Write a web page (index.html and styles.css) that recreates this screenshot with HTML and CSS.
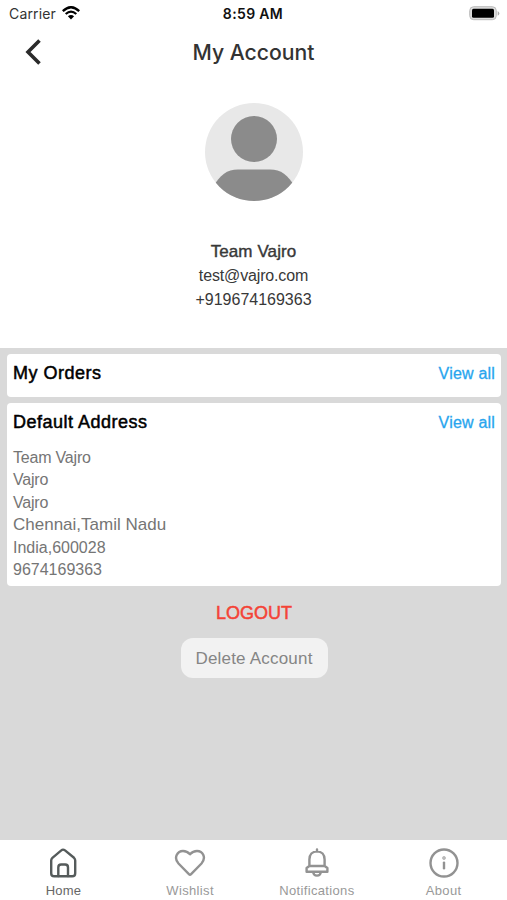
FILE: index.html
```html
<!DOCTYPE html>
<html lang="en">
<head>
	<meta charset="utf-8">
	<title>My Account</title>
	<link rel="stylesheet" href="styles.css">
</head>
<body>
	<div class="status">
		<div class="carrier">
			<span>Carrier</span>
			<svg width="18" height="14" viewBox="0 0 18 14">
				<path d="M0.8 5.1 Q9 -2.7 17.2 5.1" fill="none" stroke="#000" stroke-width="2.3"/>
				<path d="M3.7 8 Q9 3.1 14.3 8" fill="none" stroke="#000" stroke-width="2.2"/>
				<path d="M5.9 10.3 Q9 7.6 12.1 10.3 L9 13.5 Z"/>
			</svg>
		</div>
		<span class="time">8:59 AM</span>
		<svg class="battery" width="31" height="15" viewBox="0 0 31 15">
			<rect x="0.7" y="0.7" width="26.6" height="13" rx="4" fill="#ddd" stroke="#bbb"/>
			<rect x="3" y="2.7" width="22" height="9" rx="1.5"/>
			<path d="M28.7 5 Q32 7.4 28.7 9.8 Z" fill="#aaa"/>
		</svg>
	</div>
	<header class="header">
		<svg class="back" width="16" height="26" viewBox="0 0 16 26">
			<path d="M14.5 1.5 L3 13 L14.5 24.5" fill="none" stroke="#2b2b2b" stroke-width="3.6"/>
		</svg>
		<h1>My Account</h1>
	</header>
	<section class="profile">
		<svg width="98" height="98" viewBox="0 0 98 98">
			<clipPath id="round"><circle cx="49" cy="49" r="49"/></clipPath>
			<g clip-path="url(#round)">
				<rect width="98" height="98" fill="#e8e8e8"/>
				<circle cx="49" cy="36" r="23" fill="#8b8b8b"/>
				<path d="M8 84 C15 72 22 66.5 33 66.5 H65 C76 66.5 83 72 90 84 V98 H8 Z" fill="#8b8b8b"/>
			</g>
		</svg>
		<div class="name">Team Vajro</div>
		<div class="contact mail">test@vajro.com</div>
		<div class="contact">+919674169363</div>
	</section>
	<main>
		<div class="card">
			<div class="card-head">
				<h2>My Orders</h2>
				<a>View all</a>
			</div>
		</div>
		<div class="card">
			<div class="card-head">
				<h2>Default Address</h2>
				<a>View all</a>
			</div>
			<div class="address">
				<div class="person">Team Vajro</div>
				<div class="person">Vajro</div>
				<div class="person">Vajro</div>
				<div class="city">Chennai,Tamil Nadu</div>
				<div>India,600028</div>
				<div>9674169363</div>
			</div>
		</div>
		<a class="logout">LOGOUT</a>
		<button type="button" class="delete">Delete Account</button>
	</main>
	<nav class="tabs">
		<div class="tab active">
			<svg width="32" height="32" viewBox="0 0 32 32">
				<path d="M16 2.6 Q15.2 2.6 14.3 3.4 L5.4 10.8 Q4.2 11.9 4.2 13.6 V26.2 Q4.2 29.3 7.2 29.3 H25.2 Q28.2 29.3 28.2 26.2 V13.6 Q28.2 11.9 27 10.8 L18 3.4 Q17 2.6 16 2.6 Z"/>
				<path d="M11.3 29 V20.5 Q11.3 17.5 14.1 17.5 H18.2 Q21 17.5 21 20.5 V29"/>
			</svg>
			<span>Home</span>
		</div>
		<div class="tab">
			<svg width="32" height="32" viewBox="0 0 32 32">
				<path d="M14.9 27.1 L4.5 16.5 C-0.8 10.6 3.5 4 9 4 Q13 4 16 7.3 Q19 4 23 4 C28.8 4 32.6 10.6 27.5 16.5 L17.1 27.1 Q16 28.2 14.9 27.1 Z"/>
			</svg>
			<span>Wishlist</span>
		</div>
		<div class="tab">
			<svg width="32" height="32" viewBox="0 0 32 32">
				<path d="M16 2.4 V4.5 M8.4 19 V12.5 C8.4 7.5 11.4 4.4 16 4.4 C20.6 4.4 23.6 7.5 23.6 12.5 V19 L26.4 21 V24.8 H5.6 V21 L8.4 19 H23.6 M12.2 25 Q12.5 28.6 16 28.6 Q19.5 28.6 19.8 25"/>
			</svg>
			<span>Notifications</span>
		</div>
		<div class="tab">
			<svg width="32" height="32" viewBox="0 0 32 32">
				<circle cx="16" cy="16" r="13.5"/>
				<path d="M16 15.6 V21.3"/>
				<circle cx="16" cy="11" r="0.5"/>
			</svg>
			<span>About</span>
		</div>
	</nav>
</body>
</html>
```

FILE: styles.css
```css
* {
	box-sizing: border-box;
}

body {
	margin: 0;
	height: 900px;
	display: flex;
	flex-direction: column;
	font-family: "Liberation Sans", Arial, sans-serif;
	background-color: #fff;
}

svg {
	display: block;
}

.status {
	height: 27px;
	padding: 0 7px 0 9px;
	display: grid;
	grid-template-columns: 1fr auto 1fr;
	align-items: center;
	font: 14px Inter, sans-serif;
	color: #333;
}

.carrier {
	display: flex;
	gap: 6px;
	align-items: center;
	letter-spacing: 0.15px;
}

	.carrier svg {
		margin-top: -2px;
	}

.time {
	margin-right: 3px;
	font-weight: 600;
	letter-spacing: 0.35px;
	color: #111;
}

.battery {
	justify-self: end;
	margin-top: -1px;
}

.header {
	height: 50px;
	padding: 0 25px;
	display: grid;
	grid-template-columns: 1fr auto 1fr;
	align-items: center;
}

h1 {
	margin: 0;
	font: 500 21.2px Inter, sans-serif;
	color: #333;
}

.profile {
	height: 271px;
	padding-top: 26px;
	display: flex;
	flex-direction: column;
	align-items: center;
	color: #383838;
}

.name {
	margin-top: 38px;
	padding-top: 1px;
	font-size: 17px;
	line-height: 24px;
	letter-spacing: 0.1px;
	-webkit-text-stroke: 0.4px;
}

.contact {
	font-size: 16px;
	line-height: 24px;
}

.mail {
	letter-spacing: -0.15px;
}

main {
	flex: 1;
	padding: 6px 6px 0 7px;
	display: flex;
	flex-direction: column;
	gap: 6px;
	background-color: #d9d9d9;
}

.card {
	padding: 0 6px;
	border-radius: 4px;
	background-color: #fff;
}

.card-head {
	height: 43px;
	padding-bottom: 4px;
	display: flex;
	justify-content: space-between;
	align-items: center;
}

h2 {
	margin: 0;
	font-size: 18px;
	font-weight: normal;
	letter-spacing: 0.5px;
	color: #000;
	-webkit-text-stroke: 0.5px;
}

.card-head a {
	font-size: 16px;
	letter-spacing: 0.2px;
	color: #28a5ee;
	-webkit-text-stroke: 0.3px;
}

.address {
	padding: 1px 0 5px;
	font-size: 16px;
	line-height: 22.4px;
	color: #757575;
}

.person {
	letter-spacing: -0.2px;
}

.city {
	font-size: 17px;
}

.logout {
	margin-top: 10px;
	align-self: center;
	font-size: 18px;
	line-height: 22px;
	color: #f44336;
	-webkit-text-stroke: 0.5px;
}

.delete {
	margin-top: 8px;
	align-self: center;
	width: 147px;
	height: 40px;
	padding: 2px 0 0;
	border: 0;
	border-radius: 12px;
	font: 17px "Liberation Sans", Arial, sans-serif;
	letter-spacing: 0.2px;
	color: #858585;
	background-color: #f2f2f2;
}

.tabs {
	height: 60px;
	padding-top: 7px;
	display: grid;
	grid-template-columns: repeat(4, 1fr);
}

.tab {
	display: flex;
	flex-direction: column;
	align-items: center;
	font-size: 13px;
	line-height: 24px;
	letter-spacing: 0.35px;
	color: #999;
}

	.tab svg {
		fill: none;
		stroke: #929292;
		stroke-width: 2.4;
		stroke-linecap: round;
		stroke-linejoin: round;
	}

	.tab.active {
		letter-spacing: 0.2px;
		color: #666;
	}

		.tab.active svg {
			stroke: #555b5b;
		}
```
